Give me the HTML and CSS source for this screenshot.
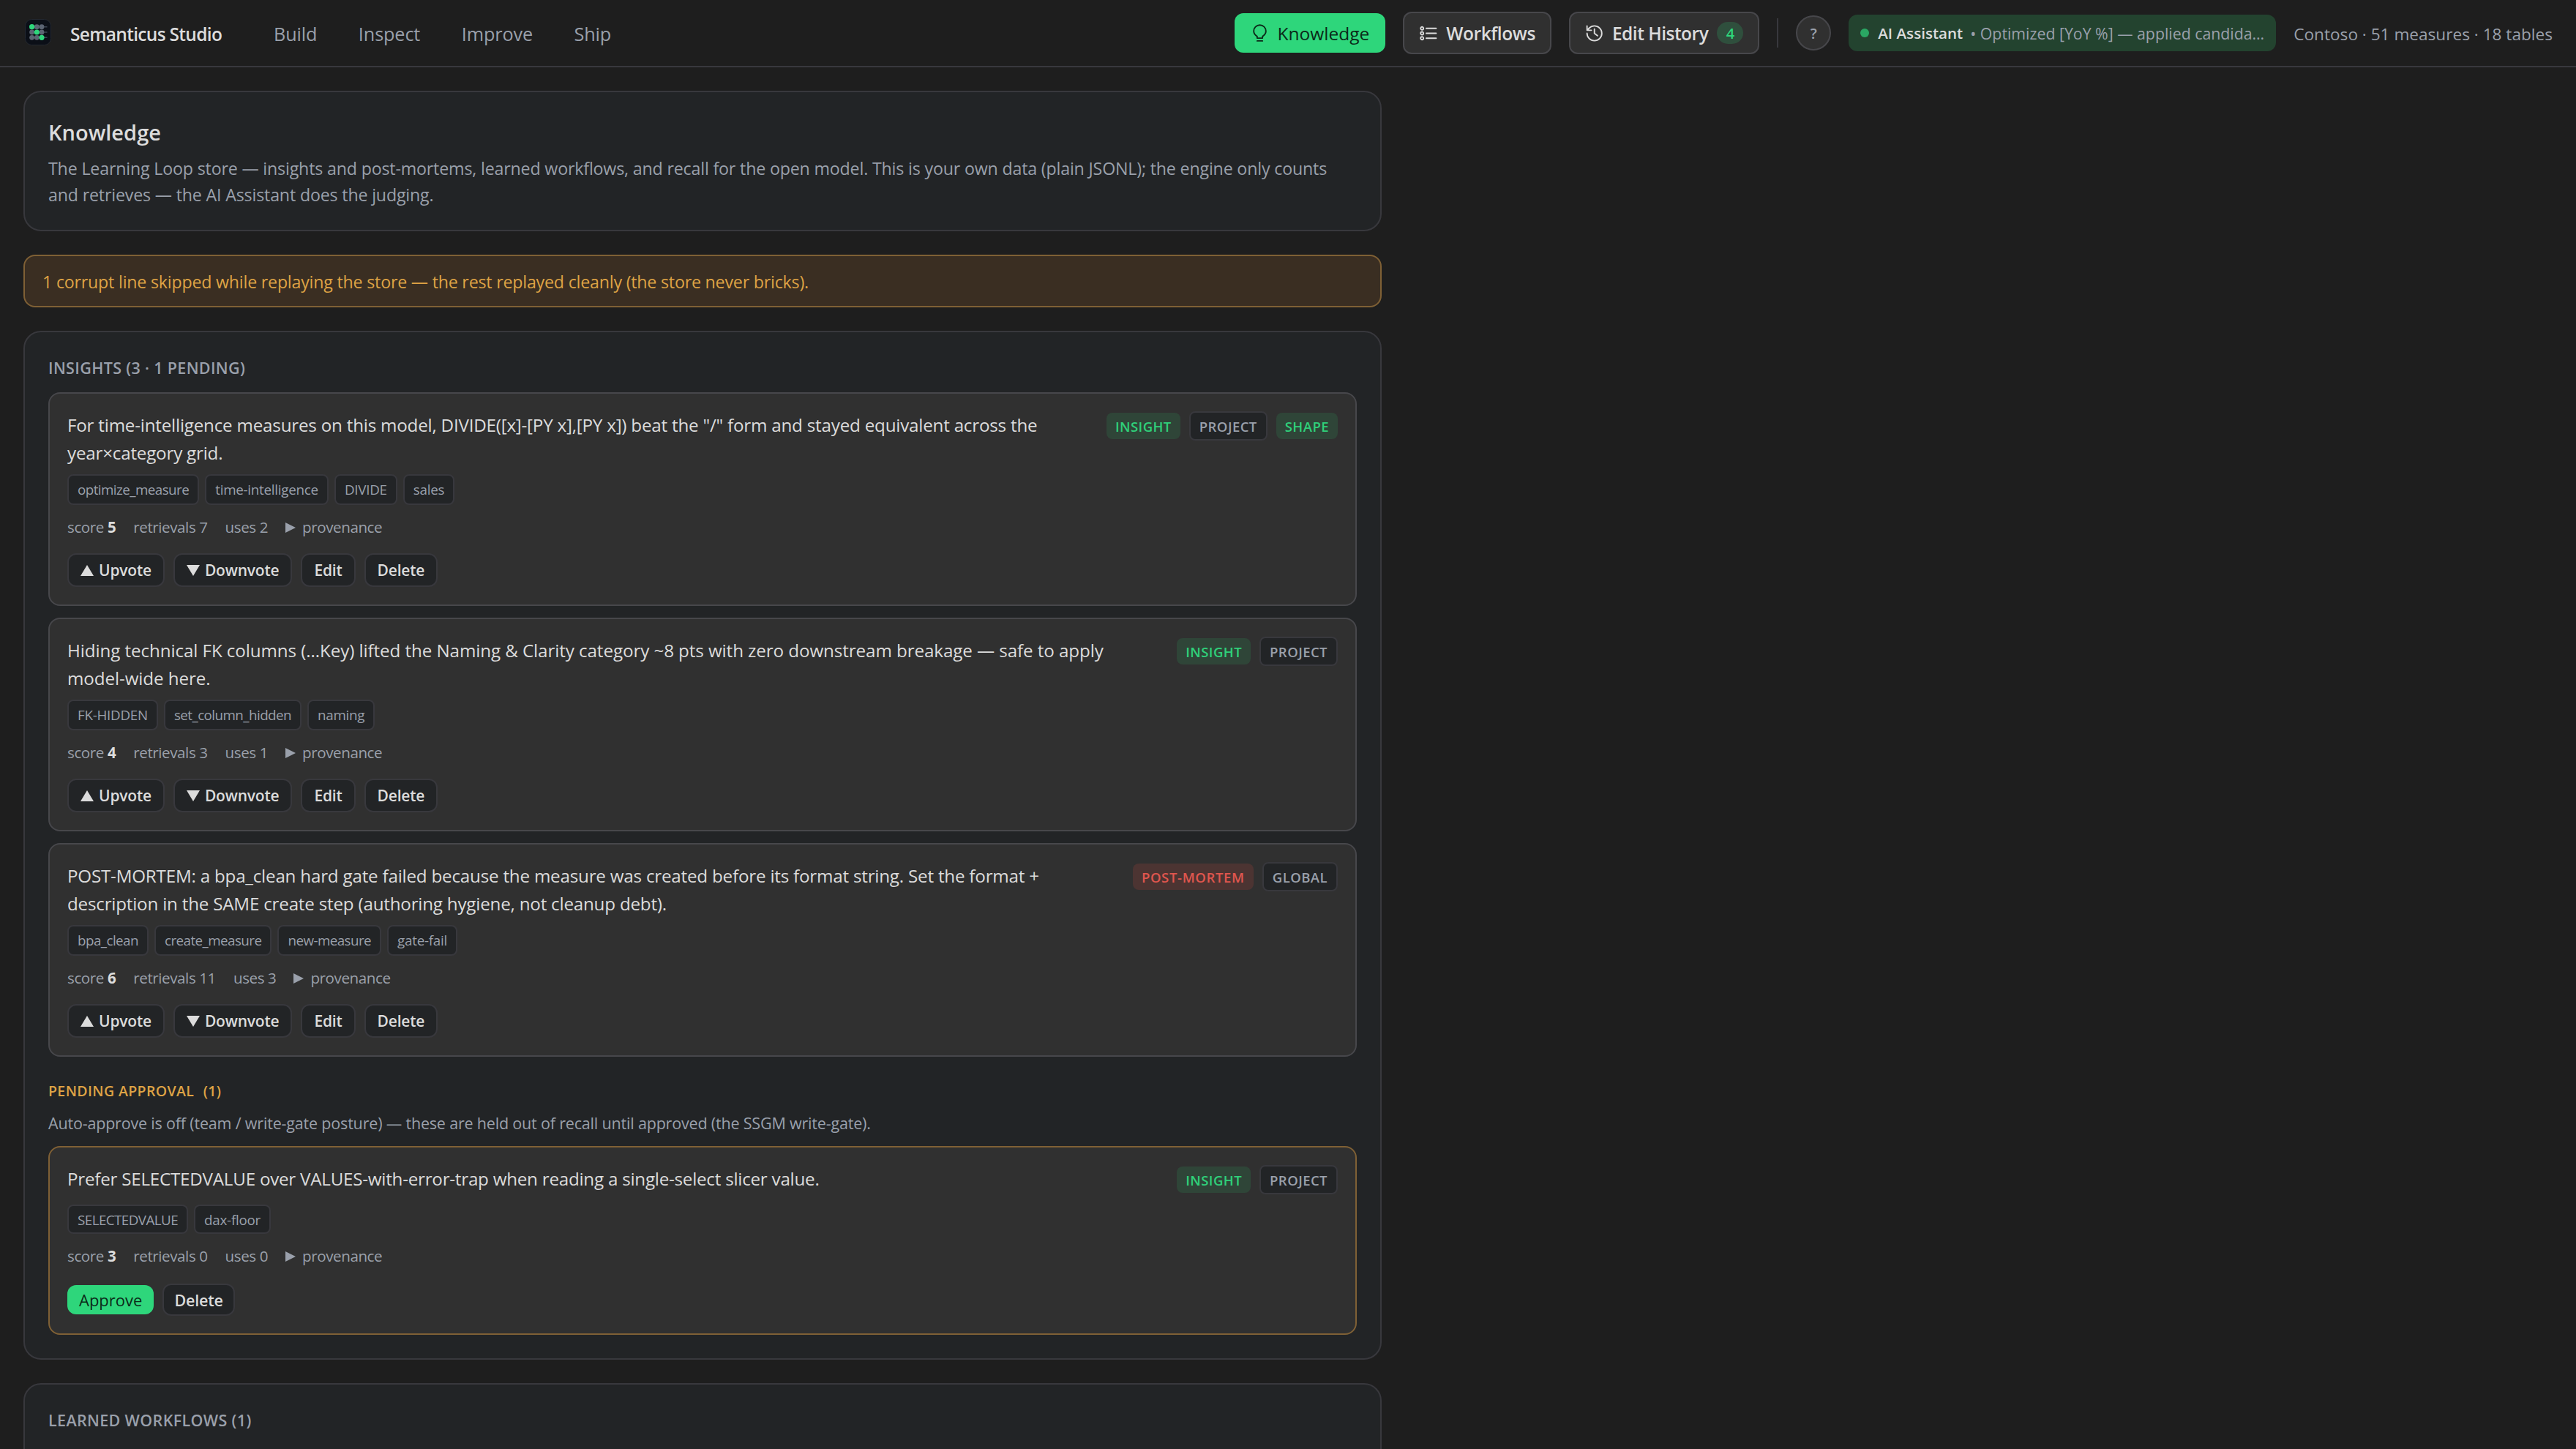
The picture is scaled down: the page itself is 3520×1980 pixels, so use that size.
FILE: index.html
```
<!DOCTYPE html>
<html lang="en">
<head>
    <meta charset="UTF-8">
    <meta name="viewport" content="width=device-width, initial-scale=1.0">
    <title>Semanticus Studio</title>
    <link rel="stylesheet" href="styles.css">
</head>
<body>

    <header class="topbar">
        <svg class="logo" viewBox="0 0 36 36">
            <rect x="0.5" y="0.5" width="35" height="35" rx="9" fill="#0b0f17" stroke="#232830"/>
            <path d="M9 10.700h21.500M9 18h21.500M9 25.300h21.500" stroke="#3c4452" stroke-width="1.5"/>
            <g fill="#5b6472">
                <circle cx="16.3" cy="10.7" r="3.4"/><circle cx="23" cy="10.7" r="3.4"/>
                <circle cx="9.6" cy="18" r="3.4"/><circle cx="23" cy="18" r="3.4"/>
                <circle cx="9.6" cy="25.3" r="3.4"/><circle cx="16.3" cy="25.3" r="3.4"/>
            </g>
            <g fill="#2ed67b">
                <circle cx="9.6" cy="10.7" r="3.6"/><circle cx="16.3" cy="18" r="3.6"/><circle cx="23" cy="25.3" r="3.6"/>
            </g>
        </svg>
        <span class="brand">Semanticus Studio</span>
        <nav class="nav">
            <a>Build</a>
            <a>Inspect</a>
            <a>Improve</a>
            <a>Ship</a>
        </nav>
        <div class="tools">
            <button class="tool tool-active">
                <svg class="icon" viewBox="0 0 24 24"><path d="M8.500 18.300v-2.100C6.400 14.800 4 12.800 4 9.200a8 8 0 0 1 16 0c0 3.600-2.400 5.600-4.500 7v2.100zM8.500 22h7"/></svg>
                <span>Knowledge</span>
            </button>
            <button class="tool tool-workflows">
                <svg class="icon" viewBox="0 0 24 24"><path d="M9.500 5.500h13M9.500 12h13M9.500 18.500h13"/><circle cx="4" cy="5.5" r="1.900"/><circle cx="4" cy="12" r="1.900"/><circle cx="4" cy="18.5" r="1.900"/></svg>
                <span>Workflows</span>
            </button>
            <button class="tool">
                <svg class="icon" viewBox="0 0 24 24"><path d="M2.500 12a9.700 9.700 0 1 0 9.700-9.700 9.800 9.800 0 0 0-7 3L2.500 8M2.500 2.300V8h5.700M12.200 6.500V12l4 3.200"/></svg>
                <span>Edit History</span>
                <span class="count">4</span>
            </button>
            <span class="divider"></span>
            <span class="help">?</span>
            <span class="assistant"><i class="dot"></i><b>AI Assistant</b><span class="assistant-msg">• Optimized [YoY %] — applied candida…</span></span>
            <span class="model">Contoso · 51 measures · 18 tables</span>
        </div>
    </header>

    <main class="content">
        <section class="panel intro">
            <h1>Knowledge</h1>
            <p>The Learning Loop store — insights and post-mortems, learned workflows, and recall for the open model. This is your own data (plain JSONL); the engine only counts<br>and retrieves — the AI Assistant does the judging.</p>
        </section>

        <div class="warning">1 corrupt line skipped while replaying the store — the rest replayed cleanly (the store never bricks).</div>

        <section class="panel">
            <h2>INSIGHTS (3 · 1 PENDING)</h2>

            <article class="card">
                <div class="card-head">
                    <p>For time-intelligence measures on this model, DIVIDE([x]-[PY x],[PY x]) beat the "/" form and stayed equivalent across the<br>year×category grid.</p>
                    <div class="badges"><span class="badge green">INSIGHT</span><span class="badge">PROJECT</span><span class="badge green">SHAPE</span></div>
                </div>
                <div class="tags"><span class="tight">optimize_measure</span><span>time-intelligence</span><span>DIVIDE</span><span>sales</span></div>
                <div class="stats"><span>score <b>5</b></span><span>retrievals 7</span><span>uses 2</span><span class="prov">provenance</span></div>
                <div class="actions">
                    <button><i class="up"></i>Upvote</button>
                    <button><i class="down"></i>Downvote</button>
                    <button>Edit</button>
                    <button>Delete</button>
                </div>
            </article>

            <article class="card">
                <div class="card-head">
                    <p class="loose">Hiding technical FK columns (…Key) lifted the Naming &amp; Clarity category ~8 pts with zero downstream breakage — safe to apply<br>model-wide here.</p>
                    <div class="badges"><span class="badge green">INSIGHT</span><span class="badge">PROJECT</span></div>
                </div>
                <div class="tags"><span>FK-HIDDEN</span><span class="tight">set_column_hidden</span><span>naming</span></div>
                <div class="stats"><span>score <b>4</b></span><span>retrievals 3</span><span>uses 1</span><span class="prov">provenance</span></div>
                <div class="actions">
                    <button><i class="up"></i>Upvote</button>
                    <button><i class="down"></i>Downvote</button>
                    <button>Edit</button>
                    <button>Delete</button>
                </div>
            </article>

            <article class="card">
                <div class="card-head">
                    <p>POST-MORTEM: a bpa_clean hard gate failed because the measure was created before its format string. Set the format +<br>description in the SAME create step (authoring hygiene, not cleanup debt).</p>
                    <div class="badges"><span class="badge red">POST-MORTEM</span><span class="badge">GLOBAL</span></div>
                </div>
                <div class="tags"><span class="tight">bpa_clean</span><span class="tight">create_measure</span><span class="tight">new-measure</span><span>gate-fail</span></div>
                <div class="stats"><span>score <b>6</b></span><span>retrievals 11</span><span>uses 3</span><span class="prov">provenance</span></div>
                <div class="actions">
                    <button><i class="up"></i>Upvote</button>
                    <button><i class="down"></i>Downvote</button>
                    <button>Edit</button>
                    <button>Delete</button>
                </div>
            </article>

            <h3>PENDING APPROVAL <span>(1)</span></h3>
            <p class="note">Auto-approve is off (team / write-gate posture) — these are held out of recall until approved (the SSGM write-gate).</p>

            <article class="card pending">
                <div class="card-head">
                    <p>Prefer SELECTEDVALUE over VALUES-with-error-trap when reading a single-select slicer value.</p>
                    <div class="badges"><span class="badge green">INSIGHT</span><span class="badge">PROJECT</span></div>
                </div>
                <div class="tags"><span class="tight">SELECTEDVALUE</span><span>dax-floor</span></div>
                <div class="stats"><span>score <b>3</b></span><span>retrievals 0</span><span>uses 0</span><span class="prov">provenance</span></div>
                <div class="actions">
                    <button class="approve">Approve</button>
                    <button>Delete</button>
                </div>
            </article>
        </section>

        <section class="panel">
            <h2>LEARNED WORKFLOWS (1)</h2>
        </section>
    </main>

</body>
</html>
```
FILE: styles.css
```
* {
    box-sizing: border-box;
}

body {
    margin: 0;
    height: 1980px;
    overflow: hidden;
    background-color: #1e1e1e;
    color: #dcdcdc;
    font-family: "Open Sans", "Noto Sans", sans-serif;
    font-size: 24px;
}

h1, h2, h3, p {
    margin: 0;
}

button {
    font-family: inherit;
    color: inherit;
}

/* top bar */
.topbar {
    display: flex;
    align-items: center;
    height: 92px;
    padding: 0 32px;
    border-bottom: 2px solid #38383d;
    white-space: nowrap;
}

.logo {
    width: 36px;
    height: 36px;
    margin: 0 26px 2px 2px;
}

.brand {
    width: 278px;
    padding-top: 2px;
    font-weight: 600;
    font-size: 24.5px;
    letter-spacing: -0.7px;
}

.nav {
    display: flex;
    gap: 56.5px;
    padding-top: 2px;
    color: #9aa0ab;
    font-size: 25.2px;
    letter-spacing: -0.1px;
}

.tools {
    display: flex;
    align-items: center;
    margin-left: auto;
}

.tool {
    display: flex;
    align-items: center;
    height: 58px;
    padding: 0 20px;
    margin-right: 24px;
    background-color: #303030;
    border: 2px solid #47474b;
    border-radius: 12px;
    font-size: 24.5px;
    font-weight: 600;
    letter-spacing: -0.5px;
}

.tool-active {
    height: 54px;
    padding: 0 22px;
    border: none;
    background-color: #2ed67b;
    color: #0b2a19;
    font-weight: 500;
    letter-spacing: 0;
}

.tool-workflows {
    letter-spacing: -0.4px;
}

.icon {
    width: 25px;
    height: 25px;
    margin-right: 12px;
    fill: none;
    stroke: currentColor;
    stroke-width: 1.8;
    stroke-linecap: round;
    stroke-linejoin: round;
}

.count {
    width: 36px;
    height: 30px;
    margin-left: 12px;
    border-radius: 15px;
    background-color: #2f4f3d;
    color: #2ed67b;
    font-size: 20px;
    line-height: 31px;
    text-align: center;
}

.divider {
    width: 2px;
    height: 40px;
    margin-right: 24px;
    background-color: #38383d;
}

.help {
    width: 48px;
    height: 48px;
    margin-right: 24px;
    border: 2px solid #47474b;
    border-radius: 50%;
    background-color: #303030;
    color: #9aa0ab;
    font-size: 20px;
    font-weight: 600;
    line-height: 45px;
    text-align: center;
}

.assistant {
    display: flex;
    align-items: center;
    width: 584px;
    height: 50px;
    margin-right: 24px;
    padding: 0 16px;
    border-radius: 12px;
    background-color: #23432f;
    color: #9aa0ab;
    font-size: 20.6px;
}

.assistant b {
    margin-right: 10px;
    color: #dcdcdc;
    font-weight: 600;
}

.assistant-msg {
    font-size: 21.3px;
}

.dot {
    width: 12px;
    height: 12px;
    margin-right: 12px;
    border-radius: 50%;
    background-color: #2aa763;
}

.model {
    padding-top: 2px;
    color: #9aa0ab;
    font-size: 22.62px;
}

/* page column */
.content {
    display: flex;
    flex-direction: column;
    gap: 32px;
    width: 1856px;
    margin-left: 32px;
    padding-top: 32px;
    white-space: nowrap;
}

.panel {
    padding: 32px;
    background-color: #222426;
    border: 2px solid #38383d;
    border-radius: 24px;
}

.intro {
    height: 192px;
}

h1 {
    font-size: 29px;
    font-weight: 600;
    line-height: 46px;
}

.intro p {
    margin-top: 8px;
    color: #9aa0ab;
    font-size: 23.2px;
    letter-spacing: -0.165px;
    line-height: 36px;
}

.warning {
    height: 72px;
    padding: 0 24px;
    border: 2px solid #7f6035;
    border-radius: 16px;
    background-color: #3a2e22;
    color: #dea345;
    font-size: 23.2px;
    letter-spacing: -0.2px;
    line-height: 70px;
}

h2 {
    height: 50px;
    color: #9aa0ab;
    font-size: 21.5px;
    font-weight: 600;
    letter-spacing: 0.35px;
    line-height: 33px;
}

/* insight cards */
.card {
    height: 292px;
    padding: 24px;
    margin-bottom: 16px;
    border: 2px solid #47474b;
    border-radius: 16px;
    background-color: #303030;
}

.card-head {
    display: flex;
    justify-content: space-between;
    align-items: flex-start;
}

.card-head p {
    font-size: 24.2px;
    letter-spacing: -0.21px;
    line-height: 38px;
}

.card-head .loose {
    letter-spacing: -0.09px;
}

.badges {
    display: flex;
    align-items: center;
    gap: 12px;
    height: 40px;
}

.badge {
    height: 40px;
    padding: 0 12px;
    border: 2px solid #38383d;
    border-radius: 8px;
    background-color: #222426;
    color: #9aa0ab;
    font-size: 18.5px;
    font-weight: 600;
    letter-spacing: 0.45px;
    line-height: 38px;
}

.badge.green, .badge.red {
    height: 36px;
    border: none;
    line-height: 38px;
    background-color: #2f4538;
    color: #2fd07a;
}

.badge.red {
    background-color: #4c3432;
    color: #e0564e;
    letter-spacing: 0.65px;
}

.tags {
    display: flex;
    gap: 8px;
    margin-top: 10px;
}

.tags span {
    height: 42px;
    padding: 0 12px;
    border: 2px solid #38383d;
    border-radius: 8px;
    background-color: #222426;
    color: #9aa0ab;
    font-size: 18.8px;
    letter-spacing: -0.25px;
    line-height: 39px;
}

.tags .tight {
    letter-spacing: -0.55px;
}

.stats {
    display: flex;
    gap: 24px;
    margin-top: 16px;
    color: #9aa0ab;
    font-size: 20.6px;
    letter-spacing: -0.42px;
    line-height: 29px;
}

.stats b {
    color: #dcdcdc;
}

.prov {
    display: flex;
    align-items: center;
}

.prov::before {
    content: "";
    margin-right: 9px;
    border-left: 14px solid #9aa0ab;
    border-top: 7px solid transparent;
    border-bottom: 7px solid transparent;
}

.actions {
    display: flex;
    align-items: center;
    gap: 12px;
    height: 46px;
    margin-top: 21px;
}

.actions button {
    display: flex;
    align-items: center;
    height: 46px;
    padding: 0 16px;
    border: 2px solid #38383d;
    border-radius: 12px;
    background-color: #222426;
    font-size: 21px;
    font-weight: 600;
    letter-spacing: -0.2px;
}

.up, .down {
    margin-right: 7px;
    border-left: 9px solid transparent;
    border-right: 9px solid transparent;
}

.up {
    border-bottom: 15px solid #dcdcdc;
}

.down {
    border-top: 15px solid #dcdcdc;
}

h3 {
    margin-top: 32px;
    color: #dea345;
    font-size: 19.5px;
    font-weight: 600;
    letter-spacing: 0.38px;
    line-height: 30px;
}

h3 span {
    margin-left: 7px;
}

.note {
    margin: 14px 0 16px;
    color: #9aa0ab;
    font-size: 21.5px;
    letter-spacing: -0.18px;
    line-height: 30px;
}

.card.pending {
    height: 258px;
    margin-bottom: 0;
    border-color: #7f6035;
}

.pending .card-head p {
    letter-spacing: -0.24px;
}

.pending .tags {
    margin-top: 14px;
}

.pending .tags span {
    height: 40px;
}

.pending .actions {
    height: 44px;
    margin-top: 23px;
}

.pending .actions button {
    height: 44px;
    padding: 0 14px;
    font-size: 21.5px;
}

.pending .actions .approve {
    height: 40px;
    padding: 0 16px;
    border: none;
    background-color: #2ed67b;
    color: #0b2a19;
    font-size: 22px;
    font-weight: 500;
    letter-spacing: 0;
}
```
